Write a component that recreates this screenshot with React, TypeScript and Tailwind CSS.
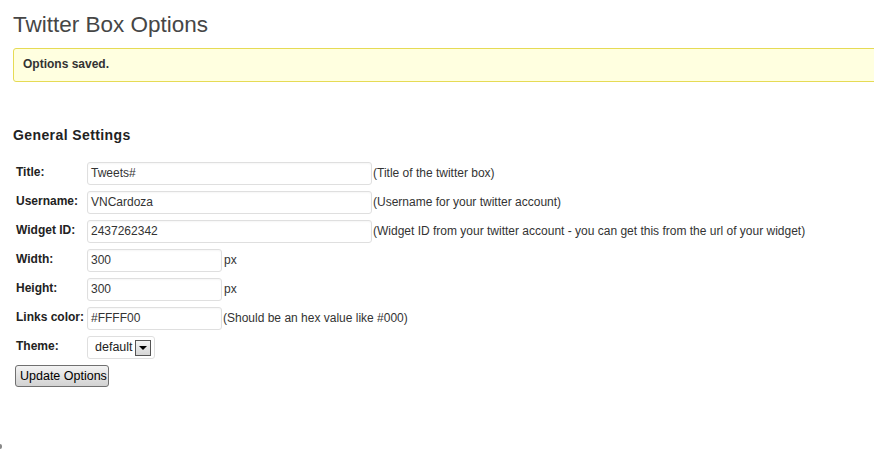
import React from "react";

const rows: { label: string; value: string; width: string; hint: string }[] = [
  { label: "Title:", value: "Tweets#", width: "w-[285px]", hint: "(Title of the twitter box)" },
  { label: "Username:", value: "VNCardoza", width: "w-[285px]", hint: "(Username for your twitter account)" },
  {
    label: "Widget ID:",
    value: "2437262342",
    width: "w-[285px]",
    hint: "(Widget ID from your twitter account - you can get this from the url of your widget)",
  },
  { label: "Width:", value: "300", width: "w-[135px]", hint: "px" },
  { label: "Height:", value: "300", width: "w-[135px]", hint: "px" },
  { label: "Links color:", value: "#FFFF00", width: "w-[135px]", hint: "(Should be an hex value like #000)" },
];

function Label({ children }: { children: React.ReactNode }) {
  return (
    <div className="w-[74px] shrink-0 pl-[3px] pt-[3px] text-[12px] leading-[14px] font-bold text-[#222]">
      {children}
    </div>
  );
}

export default function App() {
  return (
    <div className="min-h-[453px] w-[874px] overflow-hidden bg-white pl-[13px] font-['Liberation_Sans',Arial,sans-serif] text-[#333]">
      <h2 className="pt-[10px] text-[22.5px] leading-[29px] text-[#464646]">Twitter Box Options</h2>
      <div className="mt-[9px] mr-[-20px] flex h-[34px] items-center rounded-[3px] border border-[#E6DB55] bg-[#FFFFE0] pb-[2px] pl-[9px]">
        <span className="text-[12px] font-bold text-[#333]">Options saved.</span>
      </div>
      <h3 className="mt-[44px] text-[14px] leading-[18px] font-bold tracking-[0.4px] text-[#222]">General Settings</h3>
      <div className="mt-[18px] flex flex-col gap-[6px]">
        {rows.map((r) => (
          <div key={r.label} className="flex items-start">
            <Label>{r.label}</Label>
            <div
              className={`${r.width} h-[23px] shrink-0 rounded-[3px] border border-[#dfdfdf] bg-white px-[3px] text-[12px] leading-[21px] text-[#333] shadow-[inset_0_1px_2px_rgba(0,0,0,0.04)]`}
            >
              {r.value}
            </div>
            <div className={`${r.hint === "px" ? "ml-[2px]" : "ml-[1px]"} text-[12px] leading-[23px] whitespace-nowrap text-[#333]`}>
              {r.hint}
            </div>
          </div>
        ))}
        <div className="flex items-start">
          <Label>Theme:</Label>
          <div className="flex h-[23px] w-[68px] shrink-0 items-center rounded-[3px] border border-[#dfdfdf] bg-white pl-[7px]">
            <span className="text-[12.5px] leading-[21px] text-[#222]">default</span>
            <div className="ml-[2px] flex h-[16px] w-[16px] items-center justify-center border border-[#555] bg-gradient-to-b from-[#f4f4f4] to-[#d6d6d6]">
              <div className="h-0 w-0 border-t-[4px] border-r-[4px] border-l-[4px] border-t-black border-r-transparent border-l-transparent" />
            </div>
          </div>
        </div>
        <div className="flex">
          <button className="ml-[2px] h-[22px] w-[94px] rounded-[3px] border border-[#707070] bg-gradient-to-b from-[#f3f3f3] to-[#d2d2d2] px-[4px] text-[12.5px] leading-[20px] whitespace-nowrap text-black">
            Update Options
          </button>
        </div>
      </div>
      <div className="mt-[57px] ml-[-13px] h-[5px] w-[2px] rounded-r-full bg-[#888]" />
    </div>
  );
}
